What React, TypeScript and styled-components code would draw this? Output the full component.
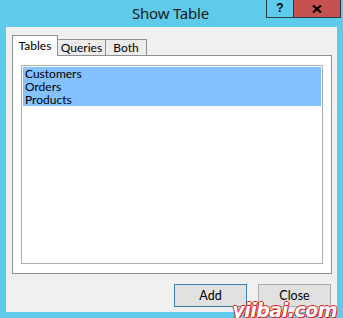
import React from 'react';
import styled, { createGlobalStyle } from 'styled-components';

const GlobalStyle = createGlobalStyle`
    html, body {
        margin: 0;
        padding: 0;
        background: #5ecbea;
    }
    body {
        font-family: Lato, "Noto Sans", sans-serif;
        font-size: 12px;
        color: #000;
    }
`

const tables = ['Customers', 'Orders', 'Products']
const tabs = [
    { label: 'Tables', width: 46 },
    { label: 'Queries', width: 48 },
    { label: 'Both', width: 42 },
]

const App: React.FC = () => {
    return (
        <Window>
            <GlobalStyle />
            <TitleBar>
                <span />
                <Title>Show Table</Title>
                <Caption>
                    <HelpButton>?</HelpButton>
                    <CloseButton>
                        <svg width="10" height="8" viewBox="0 0 10 8">
                            <path d="M1 0.5 L9 7.5 M9 0.5 L1 7.5" stroke="#000" strokeWidth="2.2" />
                        </svg>
                    </CloseButton>
                </Caption>
            </TitleBar>
            <Client>
                <TabRow>
                    { tabs.map((t, i) => (
                        <Tab key={ t.label } active={ i === 0 } w={ t.width }>{ t.label }</Tab>
                    )) }
                </TabRow>
                <Panel>
                    <ListBox>
                        { tables.map(t => (
                            <ListItem key={ t }>{ t }</ListItem>
                        )) }
                    </ListBox>
                </Panel>
                <Footer>
                    <Button primary>Add</Button>
                    <Button>Close</Button>
                </Footer>
                <Watermark>yiibai.com</Watermark>
            </Client>
        </Window>
    )
}

export default App;


const Window = styled.div `
    width: 343px;
    height: 318px;
    display: flex;
    flex-direction: column;
    background: #5ecbea;
`

const TitleBar = styled.div `
    height: 27px;
    display: grid;
    grid-template-columns: 1fr auto 1fr;
    padding-right: 2px;
`

const Title = styled.div `
    font-family: "Noto Sans", sans-serif;
    font-size: 15px;
    line-height: 26px;
    color: #1a1a1a;
    letter-spacing: -0.2px;
`

const Caption = styled.div `
    display: flex;
    justify-content: flex-end;
    align-items: flex-start;
`

const HelpButton = styled.div `
    width: 27px;
    height: 18px;
    border: 1px solid #2b3b44;
    border-top: none;
    border-right: none;
    box-sizing: border-box;
    display: flex;
    align-items: center;
    justify-content: center;
    font-family: "Liberation Sans", sans-serif;
    font-weight: bold;
    font-size: 12px;
    padding-bottom: 1px;
`

const CloseButton = styled.div `
    width: 48px;
    height: 18px;
    background: #c75050;
    border: 1px solid #2b3b44;
    border-top: none;
    box-sizing: border-box;
    display: flex;
    align-items: center;
    justify-content: center;
`

const Client = styled.div `
    position: relative;
    margin: 0 6px;
    height: 285px;
    background: #f0f0f0;
    padding: 8px 6px 0 6px;
    box-sizing: border-box;
    display: flex;
    flex-direction: column;
`

const TabRow = styled.div `
    display: flex;
    align-items: flex-end;
    height: 21px;
    position: relative;
    z-index: 1;
    margin-bottom: -1px;
`

const Tab = styled.div<{ active?: boolean; w: number }> `
    box-sizing: border-box;
    width: ${ p => p.w }px;
    height: ${ p => p.active ? '21px' : '17px' };
    padding-top: ${ p => p.active ? '2px' : '0' };
    text-align: center;
    line-height: 16px;
    font-weight: 400;
    background: ${ p => p.active ? '#fff' : '#ececec' };
    border: 1px solid #8c8f96;
    border-bottom: ${ p => p.active ? 'none' : '1px solid #8c8f96' };
    margin-left: -1px;
    &:first-child {
        margin-left: 0;
    }
    &:nth-child(2) {
        border-left: none;
        margin-left: 0;
    }
`

const Panel = styled.div `
    width: 320px;
    height: 219px;
    box-sizing: border-box;
    border: 1px solid #8c8f96;
    background: #fff;
    padding: 9px 8px 9px 8px;
`

const ListBox = styled.div `
    height: 100%;
    box-sizing: border-box;
    border: 1px solid #abadb3;
    background: #fff;
    padding: 1px 1px;
`

const ListItem = styled.div `
    height: 13px;
    line-height: 13px;
    padding-left: 2px;
    background: #84c1ff;
`

const Footer = styled.div `
    display: flex;
    justify-content: flex-end;
    gap: 11px;
    margin-top: 10px;
`

const Button = styled.div<{ primary?: boolean }> `
    width: 73px;
    height: 23px;
    box-sizing: border-box;
    border: 1px solid ${ p => p.primary ? '#3c7fb1' : '#adadad' };
    background: #e1e1e1;
    display: flex;
    align-items: center;
    justify-content: center;
    font-size: 12.5px;
`

const Watermark = styled.div `
    position: absolute;
    right: 0;
    bottom: -9px;
    font-family: "DejaVu Sans", sans-serif;
    font-style: italic;
    font-weight: bold;
    font-size: 19px;
    color: #fff;
    letter-spacing: -0.5px;
    text-shadow: 1px 1px 0 #e02020, -1px 0 0 #e02020, 0 -1px 0 #e02020, 1px 0 0 #e02020;
`
